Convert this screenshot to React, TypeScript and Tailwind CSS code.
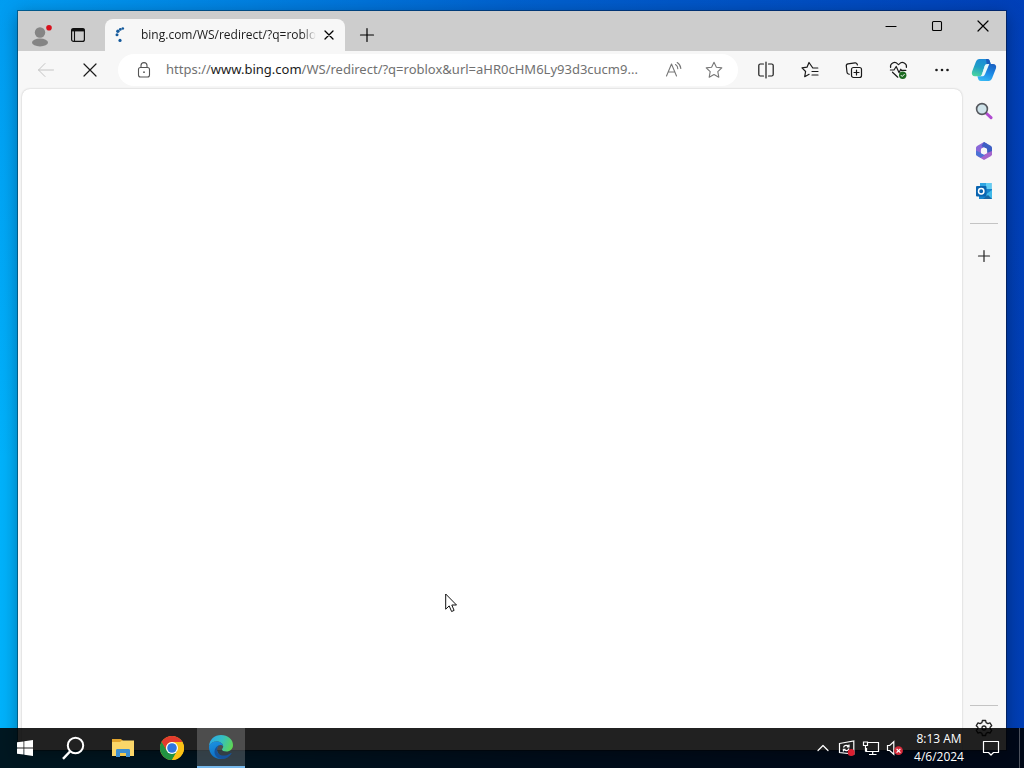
import type { ButtonHTMLAttributes, ReactNode } from 'react'
import clsx from 'clsx'

type IconButtonProps = ButtonHTMLAttributes<HTMLButtonElement> & {
  label: string
  children: ReactNode
}

function IconButton({ label, className, children, ...rest }: IconButtonProps) {
  return (
    <button
      type="button"
      aria-label={label}
      className={clsx('flex shrink-0 items-center justify-center', className)}
      {...rest}
    >
      {children}
    </button>
  )
}

function Line({ d, size = 20, className, width = 1.2 }: { d: string; size?: number; className?: string; width?: number }) {
  return (
    <svg
      width={size}
      height={size}
      viewBox={`0 0 ${size} ${size}`}
      fill="none"
      stroke="currentColor"
      strokeWidth={width}
      strokeLinecap="round"
      strokeLinejoin="round"
      className={clsx('shrink-0', className)}
    >
      <path d={d} />
    </svg>
  )
}

function ProfileIcon() {
  return (
    <svg width="24" height="24" viewBox="0 0 24 24">
      <circle cx="12" cy="7.500" r="5.200" fill="#858585" />
      <ellipse cx="12" cy="17.500" rx="8" ry="3.900" fill="#858585" />
      <circle cx="21" cy="2.800" r="2.800" fill="#d8101c" />
    </svg>
  )
}

function TabActionsIcon() {
  return (
    <svg width="16" height="16" viewBox="0 0 16 16" fill="none" stroke="#111">
      <rect x="1.600" y="1.600" width="12.800" height="12.800" rx="2" strokeWidth="1.200" />
      <path d="M1.600 3h12.800" strokeWidth="2.800" />
      <path d="M4.500 4v10.400" strokeWidth="1.100" />
    </svg>
  )
}

function SpinnerIcon() {
  return (
    <svg width="16" height="16" viewBox="0 0 16 16" fill="#155a9c" className="shrink-0">
      <circle cx="9.800" cy="1.500" r="1.300" />
      <circle cx="7.300" cy="2.400" r="1.400" />
      <circle cx="4.900" cy="4.200" r="1.700" />
      <circle cx="4" cy="7.700" r="1.500" />
      <circle cx="7" cy="13.400" r="1.600" />
    </svg>
  )
}

function LockIcon() {
  return (
    <svg width="16" height="18" viewBox="0 0 16 18" fill="none" stroke="#555" strokeWidth="1.100">
      <rect x="2.500" y="6.500" width="11" height="9.500" rx="2" />
      <path d="M5 6.500V4.600a3 3 0 0 1 6 0v1.900" />
      <circle cx="8" cy="11.200" r="0.900" fill="#555" stroke="none" />
    </svg>
  )
}

function ReadAloudIcon() {
  return <Line d="M2.500 16 7.500 4 12.500 16M4.300 12h6.400M11.500 4.500a5 5 0 0 1 2.300 4.200M13.200 2.500a7.600 7.600 0 0 1 3.600 6" width={1.1} />
}

function CollectionsIcon() {
  return (
    <svg width="20" height="20" viewBox="0 0 20 20" fill="none" stroke="#1a1a1a" strokeWidth="1.200" strokeLinecap="round">
      <rect x="7.500" y="7.500" width="10" height="10" rx="2" />
      <path d="M12.500 10v5M10 12.500h5" />
      <path d="M5.200 14.300 4 13.800a2 2 0 0 1-1-1.500L2.300 6a2 2 0 0 1 1.700-2.200l7-1a2 2 0 0 1 2.100 1.200l.3 1" />
    </svg>
  )
}

function HealthIcon() {
  return (
    <svg width="20" height="20" viewBox="0 0 20 20" fill="none" stroke="#1a1a1a" strokeWidth="1.200" strokeLinejoin="round" strokeLinecap="round">
      <path d="M2.600 7.500a4.100 4.100 0 0 1 7-3.700l.9.900.9-.9a4.100 4.100 0 0 1 7 3.600M2.400 10h3.600l2.200-3.500 2.800 6.100 1.800-3.400.7 1.200h4.300M4.500 12.200l5.300 5" />
      <circle cx="14.700" cy="15.300" r="3.700" fill="#1d6b22" stroke="none" />
      <path d="m13.100 15.400 1.100 1.100 2.100-2.100" stroke="#fff" strokeWidth="1" />
    </svg>
  )
}

function CopilotIcon() {
  return (
    <svg width="26" height="26" viewBox="0 0 26 26">
      <defs>
        <linearGradient id="cpA" x1="0.6" y1="0" x2="0.3" y2="1">
          <stop offset="0" stopColor="#1c8ad8" />
          <stop offset="0.5" stopColor="#1f9fc6" />
          <stop offset="1" stopColor="#4ad3a0" />
        </linearGradient>
        <linearGradient id="cpB" x1="0.7" y1="0" x2="0.3" y2="1">
          <stop offset="0" stopColor="#1a62c4" />
          <stop offset="0.5" stopColor="#1c8be6" />
          <stop offset="1" stopColor="#35b8f4" />
        </linearGradient>
      </defs>
      <path d="M8.500 2H16c2 0 2.600 1.200 3.100 3l.6 2H17c-2 0-3 1-3.600 3l-2.100 6.500c-.6 2-1.500 2.800-3.300 2.800H4C1.500 19.300.3 17.300 1 14.800L4.800 5C5.600 3 6.700 2 8.500 2z" fill="url(#cpA)" />
      <path d="M17.500 24H10c-2 0-2.600-1.200-3.100-3l-.5-1.700H8c2 0 3.200-.8 3.800-2.800L14 10c.7-2 1.600-3 3.600-3H22c2.500 0 3.700 1.800 3 4.300L21.200 21c-.8 2-1.900 3-3.700 3z" fill="url(#cpB)" />
      <path d="M14.300 7.800c.6-.6 1.400-.8 2.500-.8h1.500l-4 9.500c-.8 2-1.500 2.800-3.500 2.800H8c1.800 0 2.700-.8 3.300-2.800l2.100-6.500c.2-.8.500-1.700.9-2.200z" fill="#e8f8fa" />
      <path d="M15 2h1.500c1.600 0 2.100 1.200 2.600 3l.6 2h-4z" fill="#1b5bbd" />
    </svg>
  )
}

function SearchColorIcon() {
  return (
    <svg width="18" height="18" viewBox="0 0 18 18">
      <path d="m11 11 5 4.700" stroke="#b04bd0" strokeWidth="3" strokeLinecap="round" />
      <circle cx="7" cy="7" r="5.400" fill="#cfe3ea" stroke="#56595f" strokeWidth="1.600" />
    </svg>
  )
}

function Microsoft365Icon() {
  return (
    <svg width="18" height="20" viewBox="0 0 18 20">
      <path d="M9 1 2.500 4.800C1.600 5.300 1 6 1 7v7.300L6 12V8l6-3.500V2.800z" fill="#8a68d8" />
      <path d="m9 1 6.700 3.700C16.600 5.200 17 6 17 7v7l-5-2.500V8L6.500 5z" fill="#3e5fc4" />
      <path d="m17 10-5 2-6 3.600-4.500-1.200L9 19l6.700-3.700c.9-.5 1.300-1.300 1.300-2.300z" fill="#a565cc" />
      <path d="M1 9.500 6 12l4 2.300-4.500 2.500-3.100-1.700C1.500 14.600 1 14 1 13z" fill="#4d72d5" />
      <circle cx="9" cy="10" r="3.200" fill="#f7f7f7" />
    </svg>
  )
}

function OutlookIcon() {
  return (
    <svg width="18" height="18" viewBox="0 0 18 18">
      <path d="M5 1h11.500v7H5z" fill="#2fa5e2" />
      <path d="M11 1h5.500v7H11z" fill="#63cdf2" />
      <path d="M4 7h13v10H4z" fill="#1784cd" />
      <path d="m17 8-7 5 7 4z" fill="#3fb8e8" />
      <path d="m8 17 5-4 4 4z" fill="#1766a4" />
      <rect x="1" y="4" width="10.500" height="10.500" rx="1" fill="#0964b0" />
      <circle cx="6.200" cy="9.200" r="2.700" fill="none" stroke="#fff" strokeWidth="1.500" />
    </svg>
  )
}

function GearIcon() {
  return (
    <svg width="20" height="20" viewBox="0 0 20 20" fill="none" stroke="#222" strokeWidth="1.300" strokeLinejoin="round">
      <path d="m8.400 2.500-.5 2.100-1.800 1-2.100-.7-1.700 2.800L3.900 9.200v1.600l-1.600 1.500L4 15.100l2.100-.7 1.800 1 .5 2.100h3.200l.5-2.100 1.800-1 2.100.7 1.700-2.800-1.600-1.500V9.200l1.600-1.500L16 4.900l-2.100.7-1.800-1-.5-2.100z" />
      <circle cx="10" cy="10" r="2" />
    </svg>
  )
}

function StartIcon() {
  return (
    <svg width="16" height="16" viewBox="0 0 16 16" fill="#fff">
      <path d="M0 2.300 6.500 1.400v6.200H0zM7.300 1.300 16 0v7.600H7.300zM0 8.400h6.500v6.200L0 13.700zM7.300 8.400H16V16l-8.700-1.300z" />
    </svg>
  )
}

function TaskSearchIcon() {
  return (
    <svg width="24" height="24" viewBox="0 0 24 24" fill="none" stroke="#fff" strokeWidth="2">
      <circle cx="13.500" cy="9.500" r="7.700" />
      <path d="m8 15.500-7 7.300" strokeWidth="2.400" />
    </svg>
  )
}

function FolderIcon() {
  return (
    <svg width="22" height="20" viewBox="0 0 22 20">
      <path d="M0 1h9l2 2h11v5H0z" fill="#e2a52e" />
      <path d="M0 4h8l2-1.500h12V18H0z" fill="#fbd669" />
      <path d="M4 19v-6.500c0-1 .5-1.500 1.500-1.500h11c1 0 1.500.5 1.500 1.500V19h-4v-4H8v4z" fill="#3e8fd0" />
      <path d="M8 15h6v3H8z" fill="#f3c94f" />
    </svg>
  )
}

function ChromeIcon() {
  return (
    <svg width="24" height="24" viewBox="0 0 24 24">
      <circle cx="12" cy="12" r="12" fill="#fbc116" />
      <path d="M1.600 6a12 12 0 0 0 10.400 18l5.200-9L12 12 6.800 15z" fill="#229342" />
      <path d="M22.400 6A12 12 0 0 1 12 24l5.200-9L15 6z" fill="#fbc116" />
      <path d="M1.600 6A12 12 0 0 1 22.400 6H12a6 6 0 0 0-5.200 9z" fill="#e33b2e" />
      <path d="M1.600 6 6.800 15l1 2-4 1A12 12 0 0 1 1.600 6z" fill="#229342" />
      <circle cx="12" cy="12" r="6" fill="#fff" />
      <circle cx="12" cy="12" r="4.800" fill="#2f76e0" />
    </svg>
  )
}

function EdgeIcon() {
  return (
    <svg width="26" height="26" viewBox="0 0 26 26">
      <defs>
        <linearGradient id="edgeTop" x1="0" y1="0.3" x2="1" y2="0.6">
          <stop offset="0" stopColor="#2ba8e8" />
          <stop offset="0.5" stopColor="#35bfc0" />
          <stop offset="1" stopColor="#5fd653" />
        </linearGradient>
        <linearGradient id="edgeBody" x1="0" y1="0" x2="0.3" y2="1">
          <stop offset="0" stopColor="#1b93e2" />
          <stop offset="1" stopColor="#0f6fc4" />
        </linearGradient>
      </defs>
      <path d="M1 12C1.500 5.500 6.500 1 13 1c7 0 12 4.500 12 10 0 4-3 6.500-6.500 6.500-3 0-4.500-1-4.500-2 0-.8 1.200-1.200 1.200-3C15.200 9.500 12 7.500 8.500 7.500 5 7.500 2.500 9.500 1 12z" fill="url(#edgeTop)" />
      <path d="M1 13c0-3 3.500-5.500 7.500-5.500 3.700 0 6.700 2 6.700 5-.4-1-1.400-1.500-2.500-1.500-2.200 0-3.700 2-3.700 4.500 0 4.500 4 7.500 9 7.500-1.500 1.500-3.500 2-5.500 2C6 25 1 19.500 1 13z" fill="url(#edgeBody)" />
      <path d="M9 15.500C9 20 12.500 22 17 21.500c2.500-.3 4.500-1.300 6-2.500.4-.3.800 0 .5.500C21.500 23 18 25 14.500 25 9.500 25 6.500 21.500 6.500 18c0-3.500 2-6.500 6-7C10 11.500 9 13.500 9 15.500z" fill="#16539c" />
    </svg>
  )
}

function UpdateTrayIcon() {
  return (
    <svg width="18" height="18" viewBox="0 0 18 18" fill="none" stroke="#fff" strokeWidth="1.200">
      <path d="M1.500 4.500 15.800 2v13L1.500 13.500z" />
      <path d="M5.500 8.500a3 3 0 0 1 5.300-1M11 5.500v2.300H8.800M11 9.500a3 3 0 0 1-5.300 1M5.400 12.500v-2.200h2.200" />
      <circle cx="13.200" cy="13.400" r="3.500" fill="#d81f31" stroke="none" />
    </svg>
  )
}

function NetworkIcon() {
  return (
    <svg width="18" height="16" viewBox="0 0 18 16" fill="none" stroke="#fff" strokeWidth="1.200">
      <path d="M5.500 2.500h11v9h-12V8M10.700 11.500v3M7 14.500h7.500" />
      <path d="M1.500 2h4v3.500h-4zM3.500 5.500v5.700H5" />
    </svg>
  )
}

function VolumeIcon() {
  return (
    <svg width="18" height="16" viewBox="0 0 18 16" fill="none" stroke="#fff" strokeWidth="1.200">
      <path d="M1.500 5.500h2.200L7.800 1.700v12.600l-4.100-3.800H1.500z" />
      <circle cx="12.500" cy="10.700" r="4.400" fill="#d42a3a" stroke="none" />
      <path d="m10.600 8.800 3.800 3.800M14.400 8.800l-3.800 3.800" />
    </svg>
  )
}

function Pointer() {
  return (
    <svg width="13" height="20" viewBox="0 0 13 20" className="pointer-events-none absolute top-[593px] left-[445px]">
      <path d="M.7 1v15.200l3.500-3.300 2.400 5.600 2.500-1.100L6.800 12h4.700z" fill="#fff" stroke="#111" strokeWidth="1" />
    </svg>
  )
}

function TitleBar() {
  return (
    <header className="flex h-10 items-start bg-[#cdcdcd]">
      <IconButton label="Profile" className="ml-2 h-10 w-7 pt-3">
        <ProfileIcon />
      </IconButton>
      <IconButton label="Tab actions" className="mr-[19px] ml-4 h-10 w-4 pt-2">
        <TabActionsIcon />
      </IconButton>
      <div className="mt-2 flex h-8 w-60 items-center rounded-t-lg bg-[#f7f7f7] pr-1.5 pl-2">
        <SpinnerIcon />
        <div className="ml-3 flex min-w-0 flex-1">
          <span className="mask-r-from-92% text-xs whitespace-nowrap text-[#1b1b1b]">
            bing.com/WS/redirect/?q=roblo
          </span>
        </div>
        <IconButton label="Close tab" className="h-5 w-5">
          <Line size={12} d="M2 2l8 8M10 2l-8 8" width={1.3} />
        </IconButton>
      </div>
      <IconButton label="New tab" className="ml-2 h-10 w-7 pt-2">
        <Line size={16} d="M8 1.500v13M1.500 8h13" />
      </IconButton>
      <div className="ml-auto flex h-[30px] text-black">
        <IconButton label="Minimize" className="w-[46px]">
          <Line size={12} d="M1 6.500h10" />
        </IconButton>
        <IconButton label="Maximize" className="w-[46px]">
          <Line size={12} d="M2.500 1.500h7a1 1 0 0 1 1 1v7a1 1 0 0 1-1 1h-7a1 1 0 0 1-1-1v-7a1 1 0 0 1 1-1z" width={1.1} />
        </IconButton>
        <IconButton label="Close" className="w-[46px]">
          <Line size={12} d="M1 1l10 10M11 1L1 11" />
        </IconButton>
      </div>
    </header>
  )
}

function Toolbar() {
  return (
    <div className="flex h-[38px] items-center text-[#1a1a1a]">
      <IconButton label="Back" className="ml-2 w-10 text-[#c4c4c4]" disabled>
        <Line d="M17.500 10h-15M9 3.500 2.500 10 9 16.500" width={1} />
      </IconButton>
      <IconButton label="Stop" className="ml-1 w-10">
        <Line size={16} d="M2 2l12 12M14 2L2 14" />
      </IconButton>
      <div className="mr-1.5 ml-2 flex h-8 min-w-0 flex-1 items-center rounded-full bg-white pr-2">
        <IconButton label="View site information" className="ml-2 w-9">
          <LockIcon />
        </IconButton>
        <a href="#" className="ml-1 min-w-0 flex-1 truncate font-['Noto_Sans',sans-serif] text-[13px] text-[#717171]">
          https://<span className="text-[#1b1b1b]">www.bing.com</span>/WS/redirect/?q=roblox&amp;url=aHR0cHM6Ly93d3cucm9...
        </a>
        <IconButton label="Read aloud" className="w-8 text-[#777]">
          <ReadAloudIcon />
        </IconButton>
        <IconButton label="Add to favorites" className="ml-2 w-8 text-[#777]">
          <Line d="m10 2.200 2.400 5 5.400.7-4 3.800 1 5.500-4.800-2.700-4.800 2.700 1-5.500-4-3.800 5.400-.7z" width={1.1} />
        </IconButton>
      </div>
      <IconButton label="Split screen" className="w-11">
        <Line d="M10 2v16M7.500 4H4.300A1.500 1.500 0 0 0 2.800 5.500v9A1.500 1.500 0 0 0 4.300 16h3.200M12.500 4h3.200a1.500 1.500 0 0 1 1.500 1.500v9a1.500 1.500 0 0 1-1.500 1.500h-3.200" />
      </IconButton>
      <IconButton label="Favorites" className="w-11">
        <Line d="M17.800 8h-5L9 2.500 7 7.200l-5 .7 3.600 3.600-.9 5.200 4.400-2.400M12 11.500h6M12 15h6" />
      </IconButton>
      <IconButton label="Collections" className="w-11">
        <CollectionsIcon />
      </IconButton>
      <IconButton label="Browser essentials" className="w-11">
        <HealthIcon />
      </IconButton>
      <IconButton label="Settings and more" className="w-11">
        <svg width="16" height="16" viewBox="0 0 16 16" fill="#1a1a1a">
          <circle cx="2.500" cy="8" r="1.300" />
          <circle cx="8" cy="8" r="1.300" />
          <circle cx="13.500" cy="8" r="1.300" />
        </svg>
      </IconButton>
    </div>
  )
}

function Sidebar() {
  return (
    <aside className="flex w-[42px] flex-col items-center pt-[5px] pr-0.5 pb-3">
      <IconButton label="Copilot" className="h-7 w-8">
        <CopilotIcon />
      </IconButton>
      <IconButton label="Search" className="mt-[7px] h-10 w-8">
        <SearchColorIcon />
      </IconButton>
      <IconButton label="Microsoft 365" className="h-10 w-8">
        <Microsoft365Icon />
      </IconButton>
      <IconButton label="Outlook" className="h-10 w-8">
        <OutlookIcon />
      </IconButton>
      <hr className="mt-3 w-7 border-[#c4c4c4]" />
      <IconButton label="Customize" className="mt-3 h-10 w-8 text-[#222]">
        <Line size={14} d="M7 1.500v11M1.500 7h11" />
      </IconButton>
      <hr className="mt-auto w-7 border-[#c4c4c4]" />
      <IconButton label="Settings" className="mt-3 w-8">
        <GearIcon />
      </IconButton>
    </aside>
  )
}

const apps = [
  { label: 'Start', icon: <StartIcon />, active: false },
  { label: 'Search', icon: <TaskSearchIcon />, active: false },
  { label: 'File Explorer', icon: <FolderIcon />, active: false },
  { label: 'Google Chrome', icon: <ChromeIcon />, active: false },
  { label: 'Microsoft Edge', icon: <EdgeIcon />, active: true },
]

function Taskbar() {
  return (
    <footer className="absolute inset-x-0 bottom-0 flex h-10 items-stretch bg-black/87 text-white">
      <nav className="ml-px flex gap-px">
        {apps.map(app => (
          <IconButton
            key={app.label}
            label={app.label}
            className={clsx('w-12', app.active && 'border-b-2 border-[#76b9ed] bg-white/20')}
          >
            {app.icon}
          </IconButton>
        ))}
      </nav>
      <div className="ml-auto flex items-center">
        <IconButton label="Show hidden icons" className="w-6">
          <Line size={14} d="M2 9.500 7 4.500l5 5" />
        </IconButton>
        <IconButton label="Windows Update" className="w-6">
          <UpdateTrayIcon />
        </IconButton>
        <IconButton label="Network" className="w-6">
          <NetworkIcon />
        </IconButton>
        <IconButton label="Volume" className="w-6">
          <VolumeIcon />
        </IconButton>
        <div className="w-16 text-center text-xs leading-[18px]">
          <p>8:13 AM</p>
          <p>4/6/2024</p>
        </div>
        <IconButton label="Notifications" className="mr-2 w-10">
          <Line size={18} d="M1.500 2.500h15v11h-5L9 16l-2.500-2.500h-5z" />
        </IconButton>
        <div className="h-full w-[5px] border-l border-white/30" />
      </div>
    </footer>
  )
}

export default function App() {
  return (
    <div className="relative flex min-h-screen flex-col overflow-hidden bg-[linear-gradient(to_bottom,rgba(0,70,200,0.2),transparent_60%),linear-gradient(to_right,#00b2fb,#0068d0_50%,#003eb4)] px-[18px] pt-[11px] pb-[18px] font-['Open_Sans','Noto_Sans',sans-serif]">
      <main className="flex flex-1 flex-col bg-[#f7f7f7] shadow-[0_0_0_1px_rgba(0,0,0,0.35),0_4px_16px_rgba(0,0,0,0.35)]">
        <TitleBar />
        <div className="flex flex-1">
          <div className="flex min-w-0 flex-1 flex-col">
            <Toolbar />
            <section className="mr-0.5 ml-1 flex-1 rounded-t-lg bg-white shadow-[0_0_2px_rgba(0,0,0,0.25)]" />
          </div>
          <Sidebar />
        </div>
      </main>
      <Pointer />
      <Taskbar />
    </div>
  )
}
